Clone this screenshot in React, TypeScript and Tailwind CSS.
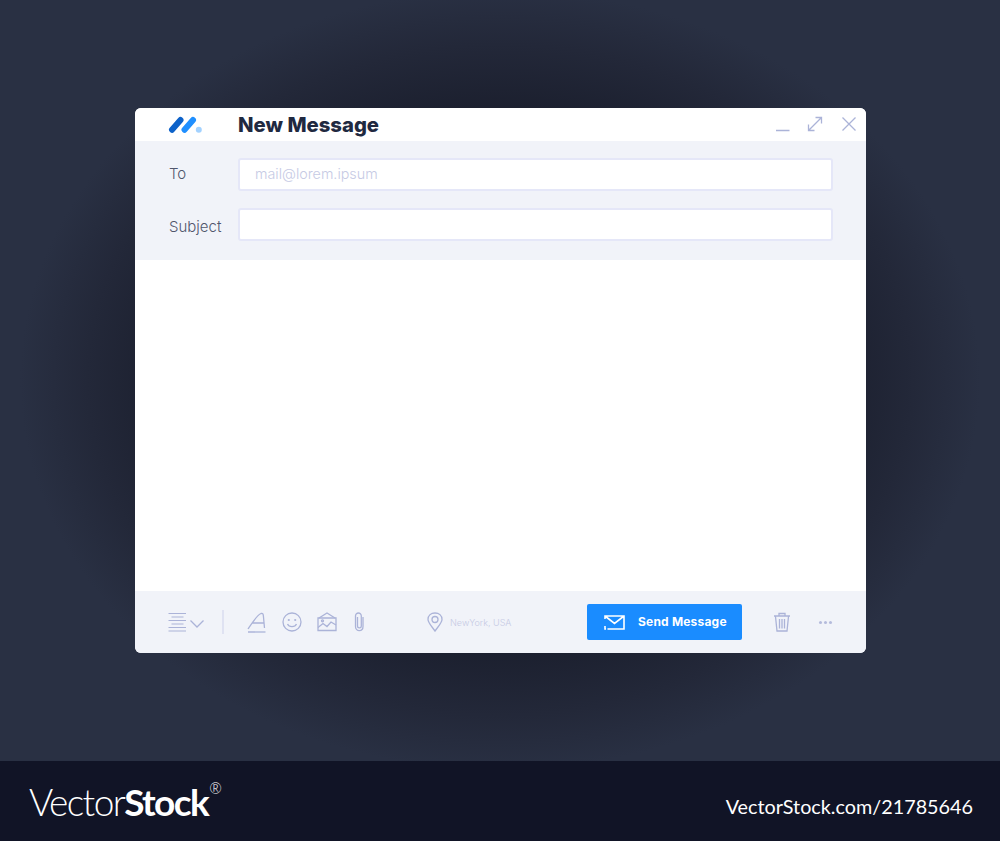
import React from "react";

const ic = "#abb3d8";

function Logo() {
  return (
    <svg width="34" height="18" viewBox="0 0 34 18" fill="none">
      <path d="M4 13.7 L12.5 4" stroke="#0d62c9" strokeWidth="6" strokeLinecap="round" />
      <path d="M16.5 13.7 L25 4" stroke="#1f8fff" strokeWidth="6" strokeLinecap="round" />
      <circle cx="30.8" cy="13.8" r="3" fill="#a3d2ff" />
    </svg>
  );
}

function WindowIcons() {
  return (
    <div className="flex items-center">
      <svg width="16" height="16" viewBox="0 0 16 16" fill="none" className="mr-[16px] mt-[1px]">
        <path d="M1 14.5 H14.5" stroke={ic} strokeWidth="1.3" />
      </svg>
      <svg width="16" height="16" viewBox="0 0 16 16" fill="none" className="mr-[18px]">
        <path d="M1.5 14.5 L14.5 1.5 M8.5 1.5 H14.5 V7.5 M1.5 8.5 V14.5 H7.5" stroke={ic} strokeWidth="1.3" />
      </svg>
      <svg width="16" height="16" viewBox="0 0 16 16" fill="none">
        <path d="M1.5 1.5 L14.5 14.5 M14.5 1.5 L1.5 14.5" stroke={ic} strokeWidth="1.3" />
      </svg>
    </div>
  );
}

function Row({ label, placeholder, mt, labelClass }: { label: string; placeholder?: string; mt: string; labelClass: string }) {
  return (
    <div className={`flex items-center ${mt}`}>
      <div className={`w-[69px] text-[15px] leading-none text-[#50566c] font-light ${labelClass}`}>{label}</div>
      <div className="flex h-[33px] w-[595px] items-center rounded-[3px] border-2 border-[#e5e7f8] bg-white pb-[1px] pl-[15px] text-[14.3px] font-light text-[#c6cae4]">
        {placeholder}
      </div>
    </div>
  );
}

function Toolbar() {
  return (
    <div className="flex h-[62px] items-center bg-[#f1f3f9] pl-[33px]">
      <svg width="37" height="20" viewBox="0 0 37 20" fill="none" stroke={ic} strokeWidth="1.2">
        <path d="M0.5 1.5 H18 M3.5 5 H15.5 M0.5 8.5 H18 M3.5 12 H15.5 M0.5 15.5 H18 M0.5 19 H18" />
        <path d="M22.5 8.5 L29 15 L35.5 8.5" strokeWidth="1.3" />
      </svg>
      <div className="ml-[17px] h-[24px] w-[2px] bg-[#dfe2f2]" />
      <svg width="20" height="21" viewBox="0 0 20 21" fill="none" stroke={ic} strokeWidth="1.3" className="ml-[23px]">
        <path d="M1 17 C5 11 10 3 14 1.5 C16 1 16.2 2 16.4 4 L17.5 16 M5.5 11 H17" />
        <path d="M1 20 H18.5" />
      </svg>
      <svg width="20" height="20" viewBox="0 0 20 20" fill="none" stroke={ic} strokeWidth="1.3" className="ml-[15px]">
        <circle cx="10" cy="10" r="9" />
        <circle cx="6.8" cy="8" r="1.1" fill={ic} stroke="none" />
        <circle cx="13.2" cy="8" r="1.1" fill={ic} stroke="none" />
        <path d="M5.5 12 C7 15.5 13 15.5 14.5 12" />
      </svg>
      <svg width="20" height="20" viewBox="0 0 20 20" fill="none" stroke={ic} strokeWidth="1.3" className="ml-[15px]">
        <path d="M1 6 H19 V18.5 H1 Z" />
        <path d="M2 6 L10 1 L18 6" />
        <path d="M1 15.5 L6 11.5 L10 14.5 L14 10 L19 13" />
        <circle cx="5.5" cy="8.8" r="1" />
      </svg>
      <svg width="10" height="20" viewBox="0 0 10 20" fill="none" stroke={ic} strokeWidth="1.3" className="ml-[17px]">
        <path d="M9 5 V14.5 C9 20 1.5 20 1.5 14.5 V4 C1.5 0 7.3 0 7.3 4 V14 C7.3 16.5 3.5 16.5 3.5 14 V5" />
      </svg>
      <svg width="16" height="20" viewBox="0 0 16 20" fill="none" stroke={ic} strokeWidth="1.3" className="ml-[63px]">
        <path d="M8 19 C4 13.5 1 10.5 1 7.5 C1 3.5 4 1 8 1 C12 1 15 3.5 15 7.5 C15 10.5 12 13.5 8 19 Z" />
        <circle cx="8" cy="7.5" r="3" />
      </svg>
      <div className="ml-[7px] w-[137px] text-[9px] leading-none font-light text-[#c6cae4]">NewYork, USA</div>
      <div className="flex h-[36px] w-[155px] items-center rounded-[2px] bg-[#1a8cff] pl-[17px] text-white">
        <svg width="21" height="15" viewBox="0 0 21 15" fill="none" stroke="#fff" strokeWidth="1.6">
          <path d="M1 4 V1 H20 V14 H3.5 M1 11 V14 H2 M1 1 L10.5 8.5 L20 1" />
        </svg>
        <span className="ml-[13px] text-[12px] leading-none font-bold tracking-[0.2px]">Send Message</span>
      </div>
      <svg width="18" height="20" viewBox="0 0 18 20" fill="none" stroke={ic} strokeWidth="1.3" className="ml-[31px]">
        <path d="M1 4 H17 M6 3.5 V1.5 H12 V3.5 M2.5 4.5 L4 19 H14 L15.5 4.5 M6.5 7 V16.5 M9 7 V16.5 M11.5 7 V16.5" />
      </svg>
      <div className="ml-[28px] flex gap-[2px]">
        <span className="h-[3px] w-[3px] rounded-full bg-[#b4bbdc]" />
        <span className="h-[3px] w-[3px] rounded-full bg-[#b4bbdc]" />
        <span className="h-[3px] w-[3px] rounded-full bg-[#b4bbdc]" />
      </div>
    </div>
  );
}

export default function App() {
  return (
    <div className="flex h-[841px] w-[1000px] flex-col overflow-hidden font-['Inter','Liberation_Sans',sans-serif]">
      <main className="h-[761px] bg-[radial-gradient(ellipse_480px_390px_at_500px_380px,#151823_0%,#1b1f2e_68%,#232839_86%,#293043_100%)] pl-[135px] pt-[108px]">
        <div className="w-[731px] overflow-hidden rounded-[6px] bg-white">
          <header className="flex h-[33px] items-center bg-white pr-[9px]">
            <div className="ml-[33px] w-[70px]">
              <Logo />
            </div>
            <h1 className="mt-[1px] text-[20.3px] leading-none font-extrabold text-[#1f2940]">New Message</h1>
            <div className="ml-auto mt-[-2px]">
              <WindowIcons />
            </div>
          </header>
          <section className="h-[119px] bg-[#f1f3f9] pl-[34px] pt-[17px]">
            <Row label="To" placeholder="mail@lorem.ipsum" mt="" labelClass="pb-[2px]" />
            <Row label="Subject" mt="mt-[17px]" labelClass="pt-[3px]" />
          </section>
          <div className="h-[331px] bg-white" />
          <Toolbar />
        </div>
      </main>
      <footer className="flex h-[80px] items-center justify-between bg-[#111426] pl-[29px] pr-[27px] text-white">
        <div className="flex items-start text-[37px] leading-none tracking-[-1.6px] font-['Lato',sans-serif]">
          <span className="font-light">Vector</span>
          <span className="font-bold">Stock</span>
          <span className="mt-[-2px] ml-[1px] text-[15px] font-light">®</span>
        </div>
        <div className="pt-[12px] text-[19.8px] leading-none font-['Lato',sans-serif]">VectorStock.com/21785646</div>
      </footer>
    </div>
  );
}
